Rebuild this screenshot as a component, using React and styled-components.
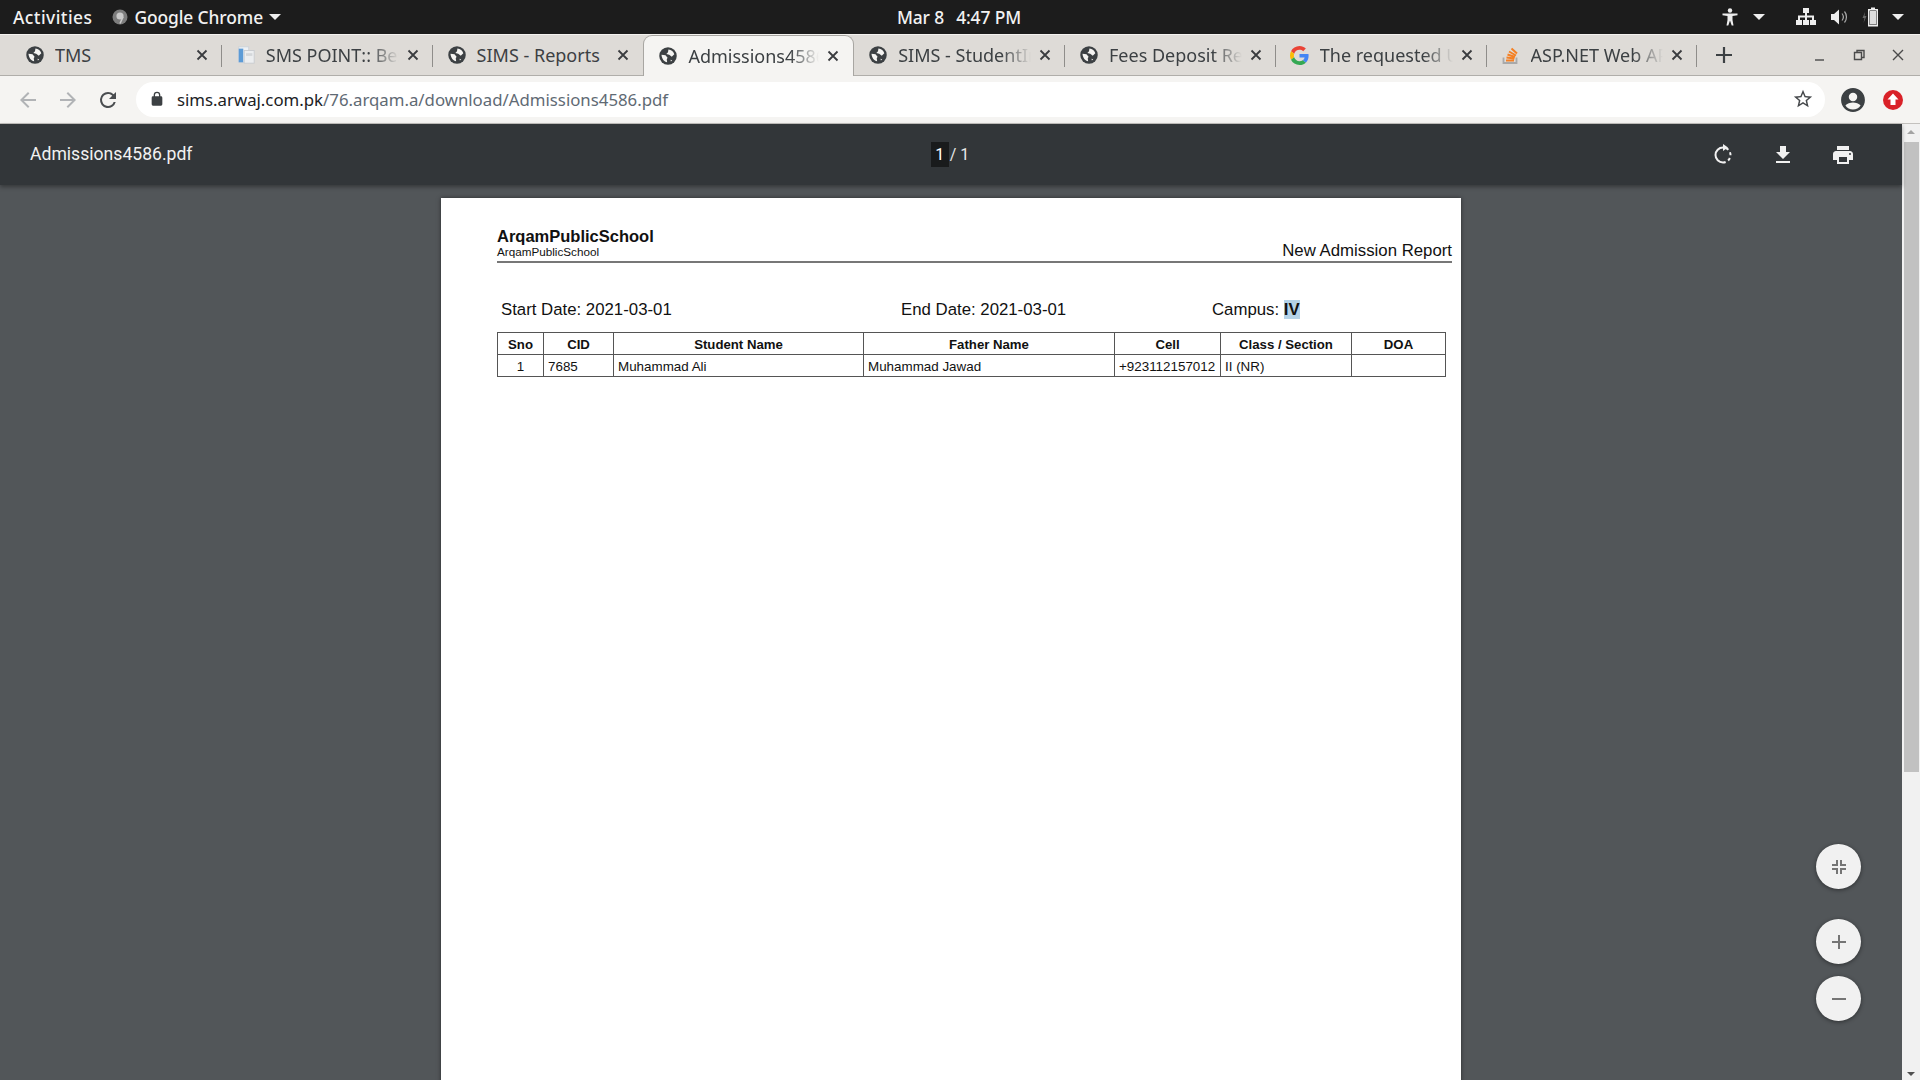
import React from "react";
import styled, { createGlobalStyle } from "styled-components";

const Global = createGlobalStyle`
	html, body {
		margin: 0;
		padding: 0;
		height: 100%;
		overflow: hidden;
		background: #525659;
	}
`;

const Screen = styled.div`
	width: 1920px;
	height: 1080px;
	display: flex;
	flex-direction: column;
	overflow: hidden;
	font-family: "Noto Sans", "Open Sans", sans-serif;
`;

/* gnome top bar */
const TopBar = styled.div`
	height: 34px;
	flex: none;
	background: #1c1c1c;
	color: #f2f2f2;
	display: grid;
	grid-template-columns: 1fr auto 1fr;
	align-items: center;
	font-size: 17.4px;
	font-weight: 500;
	letter-spacing: -0.1px;
`;
const TopLeft = styled.div`
	display: flex;
	align-items: center;
	padding-left: 13px;
`;
const ActivitiesLabel = styled.span`
	letter-spacing: 0.45px;
`;
const AppName = styled.div`
	display: flex;
	align-items: center;
	gap: 6px;
	margin-left: 20px;
`;
const ChromeDot = styled.svg`
	width: 16px;
	height: 16px;
	flex: none;
`;
const Clock = styled.div`
	display: flex;
	gap: 12px;
	transform: translateX(-1px);
`;
const TopRight = styled.div`
	display: flex;
	align-items: center;
	justify-content: flex-end;
	padding-right: 16px;
`;
const Caret = styled.span`
	width: 0;
	height: 0;
	border-left: 6px solid transparent;
	border-right: 6px solid transparent;
	border-top: 6px solid #eee;
	margin-left: ${(p) => p.$left || 0}px;
`;
const TrayIcon = styled.svg`
	width: ${(p) => p.$w || 18}px;
	height: 20px;
	margin-left: ${(p) => p.$left || 0}px;
	fill: #eee;
	display: block;
`;

/* chrome tab strip */
const TabStrip = styled.div`
	height: 42px;
	flex: none;
	background: #dedbd7;
	border-bottom: 1px solid #b0aeaa;
	box-sizing: border-box;
	display: flex;
	align-items: stretch;
	padding-left: 11px;
	padding-top: 1px;
	box-shadow: inset 0 1px 0 #f4f2ef;
`;
const Tab = styled.div`
	width: 210.8px;
	box-sizing: border-box;
	display: flex;
	align-items: center;
	position: relative;
	padding: 0 12px ${(p) => (p.$active ? "1px" : "0")} 14px;
	color: #3c4043;
	font-size: 18px;
	background: ${(p) => (p.$active ? "#f5f4f2" : "transparent")};
	border: ${(p) => (p.$active ? "1px solid #a8a6a2" : "none")};
	border-bottom: none;
	border-radius: ${(p) => (p.$active ? "9px 9px 0 0" : "0")};
	margin-bottom: ${(p) => (p.$active ? "-1px" : "0")};
	&::after {
		content: "";
		display: ${(p) => (p.$sep ? "block" : "none")};
		position: absolute;
		right: 0;
		top: 10px;
		bottom: 8px;
		width: 1px;
		background: #8f8d8a;
	}
`;
const TabIcon = styled.span`
	width: 20px;
	height: 20px;
	flex: none;
	display: flex;
	align-items: center;
	justify-content: center;
`;
const TabTitle = styled.span`
	flex: 1;
	min-width: 0;
	margin-left: 10px;
	white-space: nowrap;
	overflow: hidden;
	-webkit-mask-image: ${(p) =>
		p.$fade ? "linear-gradient(to right, #000 78%, transparent 100%)" : "none"};
	mask-image: ${(p) =>
		p.$fade ? "linear-gradient(to right, #000 78%, transparent 100%)" : "none"};
`;
const TabClose = styled.svg`
	width: 12px;
	height: 12px;
	flex: none;
	margin-left: 8px;
	margin-right: 2px;
	stroke: #3a3c3f;
	stroke-width: 1.8;
	fill: none;
`;
const NewTab = styled.svg`
	width: 18px;
	height: 18px;
	margin-left: 18px;
	align-self: center;
	stroke: #3c4043;
	stroke-width: 2.2;
`;
const WinControls = styled.div`
	margin-left: auto;
	display: flex;
	align-items: center;
	gap: 25px;
	padding-right: 15px;
`;
const WinIcon = styled.svg`
	width: 14px;
	height: 14px;
	stroke: #4a4a4a;
	stroke-width: 1.4;
	fill: none;
`;

/* address bar */
const AddressBar = styled.div`
	height: 48px;
	flex: none;
	box-sizing: border-box;
	background: #f5f4f2;
	border-bottom: 1px solid #c3c1be;
	display: flex;
	align-items: center;
	padding-left: 16px;
`;
const NavIcon = styled.svg`
	width: 24px;
	height: 24px;
	flex: none;
	margin-right: ${(p) => p.$right || 0}px;
	fill: ${(p) => (p.$dim ? "#b1b3b6" : "#4a4d50")};
`;
const Omnibox = styled.div`
	flex: none;
	width: 1689px;
	height: 35px;
	margin-left: 16px;
	margin-top: -1px;
	background: #fff;
	border-radius: 18px;
	display: flex;
	align-items: center;
	padding-left: 13px;
	box-sizing: border-box;
	font-size: 16.8px;
	color: #5f6a74;
`;
const LockIcon = styled.svg`
	width: 16px;
	height: 16px;
	flex: none;
	margin-right: 12px;
	fill: #3c4043;
`;
const UrlHost = styled.span`
	color: #202124;
`;
const StarIcon = styled.svg`
	width: 22px;
	height: 22px;
	margin-left: auto;
	margin-right: 11px;
	fill: #45484b;
`;
const ProfileIcon = styled.svg`
	width: 26px;
	height: 26px;
	margin-left: 15px;
	flex: none;
`;
const UpdateIcon = styled.svg`
	width: 22px;
	height: 22px;
	margin-left: 16px;
	flex: none;
`;

/* pdf viewer */
const Viewer = styled.div`
	flex: 1;
	min-height: 0;
	display: flex;
`;
const ViewerMain = styled.div`
	flex: 1;
	min-width: 0;
	background: #525659;
	display: flex;
	flex-direction: column;
	position: relative;
`;
const PdfToolbar = styled.div`
	height: 61px;
	flex: none;
	background: #323639;
	color: #f1f1f1;
	box-shadow: 0 2px 4px rgba(0, 0, 0, 0.35);
	display: grid;
	grid-template-columns: 1fr auto 1fr;
	align-items: center;
	font-family: Roboto, "Liberation Sans", sans-serif;
	position: relative;
	z-index: 1;
`;
const FileName = styled.div`
	font-size: 17.6px;
	padding-left: 30px;
	margin-top: -2px;
`;
const Pager = styled.div`
	display: flex;
	align-items: center;
	font-size: 16px;
	margin-left: -2px;
	color: #e8e8e8;
`;
const PageInput = styled.span`
	background: #191b1c;
	color: #fff;
	height: 25px;
	width: 18px;
	display: flex;
	align-items: center;
	justify-content: center;
	margin-right: 1px;
`;
const PdfActions = styled.div`
	display: flex;
	justify-content: flex-end;
	align-items: center;
	gap: 36px;
	padding-right: 47px;
`;
const ActionIcon = styled.svg`
	width: 24px;
	height: 24px;
	fill: #f1f1f1;
	display: block;
`;
const PageArea = styled.div`
	flex: 1;
	min-height: 0;
	overflow: hidden;
	padding-top: 13px;
	padding-left: 441px;
`;
const Page = styled.div`
	width: 1020px;
	height: 900px;
	box-sizing: border-box;
	background: #fff;
	padding: 27px 9px 0 56px;
	box-shadow: 0 0 4px rgba(0, 0, 0, 0.5);
	font-family: "Liberation Sans", Arial, sans-serif;
	color: #111;
`;
const ReportHead = styled.div`
	display: flex;
	justify-content: space-between;
	align-items: flex-end;
	border-bottom: 2px solid #777;
	height: 36px;
`;
const SchoolName = styled.div`
	font-size: 16.5px;
	font-weight: bold;
	line-height: 18px;
	margin-bottom: 1px;
`;
const SchoolSub = styled.div`
	font-size: 11.7px;
	line-height: 12px;
	margin-bottom: 3px;
`;
const ReportTitle = styled.div`
	font-size: 16.8px;
	line-height: 20px;
`;
const FilterRow = styled.div`
	display: grid;
	grid-template-columns: 400px 311px auto;
	padding-left: 4px;
	margin-top: 37px;
	font-size: 16.8px;
	line-height: 20px;
`;
const Highlight = styled.b`
	background: #b5d3e8;
`;
const ReportTable = styled.table`
	border-collapse: collapse;
	table-layout: fixed;
	width: 948px;
	margin-top: 12px;
	font-size: 13.4px;
	line-height: 18px;
`;
const Th = styled.th`
	border: 1.5px solid #555;
	padding: 3px 0 0;
	height: 21px;
	box-sizing: border-box;
	font-weight: bold;
	font-size: 13.2px;
	width: ${(p) => p.$w}px;
`;
const Td = styled.td`
	border: 1.5px solid #555;
	padding: 3px 4px 0;
	height: 20px;
	box-sizing: border-box;
	white-space: nowrap;
	overflow: hidden;
	text-align: ${(p) => (p.$center ? "center" : "left")};
`;
const ZoomColumn = styled.div`
	position: absolute;
	right: 41px;
	bottom: 59px;
	display: flex;
	flex-direction: column;
	align-items: center;
`;
const ZoomButton = styled.div`
	width: 45px;
	height: 45px;
	border-radius: 50%;
	background: #f1f1f1;
	box-shadow: 0 1px 4px rgba(0, 0, 0, 0.45);
	display: flex;
	align-items: center;
	justify-content: center;
	margin-top: ${(p) => p.$top || 0}px;
`;
const ZoomGlyph = styled.svg`
	width: 16px;
	height: 16px;
	stroke: #757575;
	stroke-width: 2;
	fill: none;
`;
const ScrollBar = styled.div`
	width: 18px;
	flex: none;
	background: #f1f1f1;
	display: flex;
	flex-direction: column;
	align-items: center;
`;
const ScrollArrow = styled.span`
	width: 0;
	height: 0;
	border-left: 4px solid transparent;
	border-right: 4px solid transparent;
	margin: ${(p) => (p.$down ? "auto 0 4px" : "6px 0 0")};
	border-bottom: ${(p) => (p.$down ? "none" : "4px solid #a3a3a3")};
	border-top: ${(p) => (p.$down ? "4px solid #505050" : "none")};
`;
const ScrollThumb = styled.div`
	width: 15px;
	height: 630px;
	margin-top: 8px;
	background: #c1c1c1;
`;

const Globe = () => (
	<svg width="20" height="20" viewBox="0 0 24 24">
		<circle cx="12" cy="12" r="10.5" fill="#3c4043" />
		<path fill="#f5f4f2" d="M4.2 10.5L9 11l2.5 3-1 2 .5 3.5c-3.5-.5-6.5-4-6.8-9z" />
		<path fill="#f5f4f2" d="M12.5 4.3c3.5.3 6.3 2.7 7.1 5.7l-3.1 3-3-2.5-3.5-1 2-2z" />
		<path fill="#f5f4f2" d="M15 16.5l2 .5-1.5 1.5z" />
	</svg>
);

const DocFavicon = () => (
	<svg width="22" height="22" viewBox="0 0 22 22">
		<rect x="3" y="2" width="11" height="17" fill="#eef1f4" stroke="#ccd2d9" />
		<rect x="3" y="4" width="5" height="15" fill="#5c9bd6" />
		<rect x="9" y="6" width="11" height="14" fill="#eceef0" stroke="#c8cbcf" />
		<rect x="11" y="9" width="7" height="3" fill="#d4d7da" />
	</svg>
);

const GoogleFavicon = () => (
	<svg width="19" height="19" viewBox="0 0 48 48">
		<path fill="#EA4335" d="M24 9.5c3.54 0 6.71 1.22 9.21 3.6l6.85-6.85C35.9 2.38 30.47 0 24 0 14.62 0 6.51 5.38 2.56 13.22l7.98 6.19C12.43 13.72 17.74 9.5 24 9.5z" />
		<path fill="#4285F4" d="M46.98 24.55c0-1.57-.15-3.09-.38-4.55H24v9.02h12.94c-.58 2.96-2.26 5.48-4.78 7.18l7.73 6c4.51-4.18 7.09-10.36 7.09-17.65z" />
		<path fill="#FBBC05" d="M10.53 28.59c-.48-1.45-.76-2.99-.76-4.59s.27-3.14.76-4.59l-7.98-6.19C.92 16.46 0 20.12 0 24c0 3.88.92 7.54 2.56 10.78l7.97-6.19z" />
		<path fill="#34A853" d="M24 48c6.48 0 11.93-2.13 15.89-5.81l-7.73-6c-2.15 1.45-4.92 2.3-8.16 2.3-6.26 0-11.57-4.22-13.47-9.91l-7.98 6.19C6.51 42.62 14.62 48 24 48z" />
	</svg>
);

const StackFavicon = () => (
	<svg width="20" height="20" viewBox="0 0 20 20" fill="none">
		<path d="M2.5 12.5v5.5h13v-5.5" stroke="#a9a9a9" strokeWidth="1.8" />
		<path d="M5 15.5h8M5.5 12.5l8 1M6.5 9.5l7.5 2.5M8 6.5l7 4M10.5 3.5l5.5 5" stroke="#f48024" strokeWidth="2" />
	</svg>
);

const tabs = [
	{ title: "TMS", icon: <Globe />, sep: true },
	{ title: "SMS POINT:: Best SMS", icon: <DocFavicon />, sep: true, fade: true },
	{ title: "SIMS - Reports", icon: <Globe /> },
	{ title: "Admissions4586.pdf", icon: <Globe />, active: true, fade: true },
	{ title: "SIMS - StudentInfo", icon: <Globe />, sep: true, fade: true },
	{ title: "Fees Deposit Report", icon: <Globe />, sep: true, fade: true },
	{ title: "The requested URL", icon: <GoogleFavicon />, sep: true, fade: true },
	{ title: "ASP.NET Web API", icon: <StackFavicon />, sep: true, fade: true },
];

export default function App() {
	return (
		<Screen>
			<Global />
			<TopBar>
				<TopLeft>
					<ActivitiesLabel>Activities</ActivitiesLabel>
					<AppName>
						<ChromeDot viewBox="0 0 16 16">
							<circle cx="8" cy="8" r="7.5" fill="#7d7d7d" />
							<circle cx="8" cy="7" r="3.6" fill="#c9c9c9" />
							<path d="M11 8l-3 6.5" stroke="#c9c9c9" strokeWidth="1.6" />
						</ChromeDot>
						<span>Google Chrome</span>
						<Caret />
					</AppName>
				</TopLeft>
				<Clock>
					<span>Mar 8</span>
					<span>4:47 PM</span>
				</Clock>
				<TopRight>
					<TrayIcon viewBox="0 0 18 20">
						<circle cx="9" cy="3.5" r="2.2" />
						<path d="M1.5 6.5h15v1.8l-5 .8v4l1 5.4h-1.8L9 13.5l-1.7 5H5.5l1-5.4v-4l-5-.8z" />
					</TrayIcon>
					<Caret $left={14} />
					<TrayIcon $left={31} $w={20} viewBox="0 0 20 20">
						<path d="M7 1h6v5h-2v2.5h7V13h2v5h-6v-5h2v-2.5h-5V13h2v5H7v-5h2v-2.5H4V13h2v5H0v-5h2V8.5h7V6H7z" />
					</TrayIcon>
					<TrayIcon $left={14} viewBox="0 0 18 20">
						<path d="M1 7h3l5-4.5v15L4 13H1z" />
						<path d="M12 6.5c1.6 2 1.6 5 0 7M14.5 4.5c2.6 3.2 2.6 7.8 0 11" fill="none" stroke="#aaa" strokeWidth="1.2" />
					</TrayIcon>
					<TrayIcon $left={14} viewBox="0 0 18 20">
						<path d="M3 5L0.5 11h2L1.5 16 4.5 9h-2z" fill="#666" />
						<path d="M9 0.5h4v1.5h3v17.5H6V2h3zM7.5 3.5v14.5h7V3.5z" />
						<rect x="8" y="4" width="6" height="13.5" fill="#ddd" />
					</TrayIcon>
					<Caret $left={12} />
				</TopRight>
			</TopBar>

			<TabStrip>
				{tabs.map((t) => (
					<Tab key={t.title} $active={t.active} $sep={t.sep}>
						<TabIcon>{t.icon}</TabIcon>
						<TabTitle $fade={t.fade}>{t.title}</TabTitle>
						<TabClose viewBox="0 0 12 12">
							<path d="M1.5 1.5l9 9M10.5 1.5l-9 9" />
						</TabClose>
					</Tab>
				))}
				<NewTab viewBox="0 0 18 18">
					<path d="M9 1v16M1 9h16" />
				</NewTab>
				<WinControls>
					<WinIcon viewBox="0 0 14 14">
						<path d="M2 12h9" />
					</WinIcon>
					<WinIcon viewBox="0 0 14 14">
						<path d="M2.5 4.5h7v7h-7zM5 4.5V2.5h7v7h-2.5" />
					</WinIcon>
					<WinIcon viewBox="0 0 14 14">
						<path d="M2 2l10 10M12 2L2 12" />
					</WinIcon>
				</WinControls>
			</TabStrip>

			<AddressBar>
				<NavIcon $dim $right={16} viewBox="0 0 24 24">
					<path d="M20 11H7.83l5.59-5.59L12 4l-8 8 8 8 1.41-1.41L7.83 13H20z" />
				</NavIcon>
				<NavIcon $dim $right={16} viewBox="0 0 24 24">
					<path d="M12 4l-1.41 1.41L16.17 11H4v2h12.17l-5.58 5.59L12 20l8-8z" />
				</NavIcon>
				<NavIcon viewBox="0 0 24 24">
					<path d="M17.65 6.35A7.96 7.96 0 0 0 12 4a8 8 0 1 0 7.73 10h-2.08A6 6 0 1 1 12 6c1.66 0 3.14.69 4.22 1.78L13 11h7V4z" />
				</NavIcon>
				<Omnibox>
					<LockIcon viewBox="0 0 24 24">
						<path d="M18 8h-1V6a5 5 0 0 0-10 0v2H6a2 2 0 0 0-2 2v10a2 2 0 0 0 2 2h12a2 2 0 0 0 2-2V10a2 2 0 0 0-2-2zM9 6a3 3 0 0 1 6 0v2H9z" />
					</LockIcon>
					<span>
						<UrlHost>sims.arwaj.com.pk</UrlHost>/76.arqam.a/download/Admissions4586.pdf
					</span>
					<StarIcon viewBox="0 0 24 24">
						<path d="M22 9.24l-7.19-.62L12 2 9.19 8.63 2 9.24l5.46 4.73L5.82 21 12 17.27 18.18 21l-1.63-7.03zM12 15.4l-3.76 2.27 1-4.28-3.32-2.88 4.38-.38L12 6.1l1.71 4.04 4.38.38-3.32 2.88 1 4.28z" />
					</StarIcon>
				</Omnibox>
				<ProfileIcon viewBox="0 0 24 24">
					<path fill="#3c4043" d="M12 1C5.9 1 1 5.9 1 12s4.9 11 11 11 11-4.9 11-11S18.1 1 12 1zm0 4.4a3.9 3.9 0 1 1 0 7.8 3.9 3.9 0 0 1 0-7.8zm0 15.4c-2.9 0-5.5-1.4-7-3.7 1.2-1.8 4.7-2.8 7-2.8s5.8 1 7 2.8c-1.5 2.3-4.1 3.7-7 3.7z" />
				</ProfileIcon>
				<UpdateIcon viewBox="0 0 22 22">
					<circle cx="11" cy="11" r="10" fill="#d92128" />
					<path d="M11 4.5l5.5 6H13.5V16h-5v-5.5H5.5z" fill="#fff" />
				</UpdateIcon>
			</AddressBar>

			<Viewer>
				<ViewerMain>
					<PdfToolbar>
						<FileName>Admissions4586.pdf</FileName>
						<Pager>
							<PageInput>1</PageInput>/ 1
						</Pager>
						<PdfActions>
							<ActionIcon viewBox="0 1.5 24 24">
								<path d="M12 2.5l5 3.5-5 3.5z" />
								<path d="M12 6a7.5 7.5 0 0 0 0 15" fill="none" stroke="#f1f1f1" strokeWidth="2" />
								<path d="M12 6a7.5 7.5 0 1 1 0 15" fill="none" stroke="#f1f1f1" strokeWidth="2" strokeDasharray="3 2.9" strokeDashoffset="-3" />
							</ActionIcon>
							<ActionIcon viewBox="0 0 24 24">
								<path d="M19 9h-4V3H9v6H5l7 7zM5 18v2h14v-2z" />
							</ActionIcon>
							<ActionIcon viewBox="0 0 24 24">
								<path d="M19 8H5c-1.66 0-3 1.34-3 3v6h4v4h12v-4h4v-6c0-1.66-1.34-3-3-3zm-3 11H8v-5h8zm3-7a1 1 0 1 1 0-2 1 1 0 0 1 0 2zm-1-9H6v4h12z" />
							</ActionIcon>
						</PdfActions>
					</PdfToolbar>
					<PageArea>
						<Page>
							<ReportHead>
								<div>
									<SchoolName>ArqamPublicSchool</SchoolName>
									<SchoolSub>ArqamPublicSchool</SchoolSub>
								</div>
								<ReportTitle>New Admission Report</ReportTitle>
							</ReportHead>
							<FilterRow>
								<span>Start Date: 2021-03-01</span>
								<span>End Date: 2021-03-01</span>
								<span>
									Campus: <Highlight>IV</Highlight>
								</span>
							</FilterRow>
							<ReportTable>
								<thead>
									<tr>
										<Th $w={46}>Sno</Th>
										<Th $w={70}>CID</Th>
										<Th $w={250}>Student Name</Th>
										<Th $w={251}>Father Name</Th>
										<Th $w={106}>Cell</Th>
										<Th $w={131}>Class / Section</Th>
										<Th $w={94}>DOA</Th>
									</tr>
								</thead>
								<tbody>
									<tr>
										<Td $center>1</Td>
										<Td>7685</Td>
										<Td>Muhammad Ali</Td>
										<Td>Muhammad Jawad</Td>
										<Td>+923112157012</Td>
										<Td>II (NR)</Td>
										<Td />
									</tr>
								</tbody>
							</ReportTable>
						</Page>
					</PageArea>
					<ZoomColumn>
						<ZoomButton>
							<ZoomGlyph viewBox="0 0 16 16">
								<path d="M6 1v5H1M10 1v5h5M6 15v-5H1M10 15v-5h5" />
							</ZoomGlyph>
						</ZoomButton>
						<ZoomButton $top={30}>
							<ZoomGlyph viewBox="0 0 16 16">
								<path d="M8 1v14M1 8h14" />
							</ZoomGlyph>
						</ZoomButton>
						<ZoomButton $top={12}>
							<ZoomGlyph viewBox="0 0 16 16">
								<path d="M1 8h14" />
							</ZoomGlyph>
						</ZoomButton>
					</ZoomColumn>
				</ViewerMain>
				<ScrollBar>
					<ScrollArrow />
					<ScrollThumb />
					<ScrollArrow $down />
				</ScrollBar>
			</Viewer>
		</Screen>
	);
}
